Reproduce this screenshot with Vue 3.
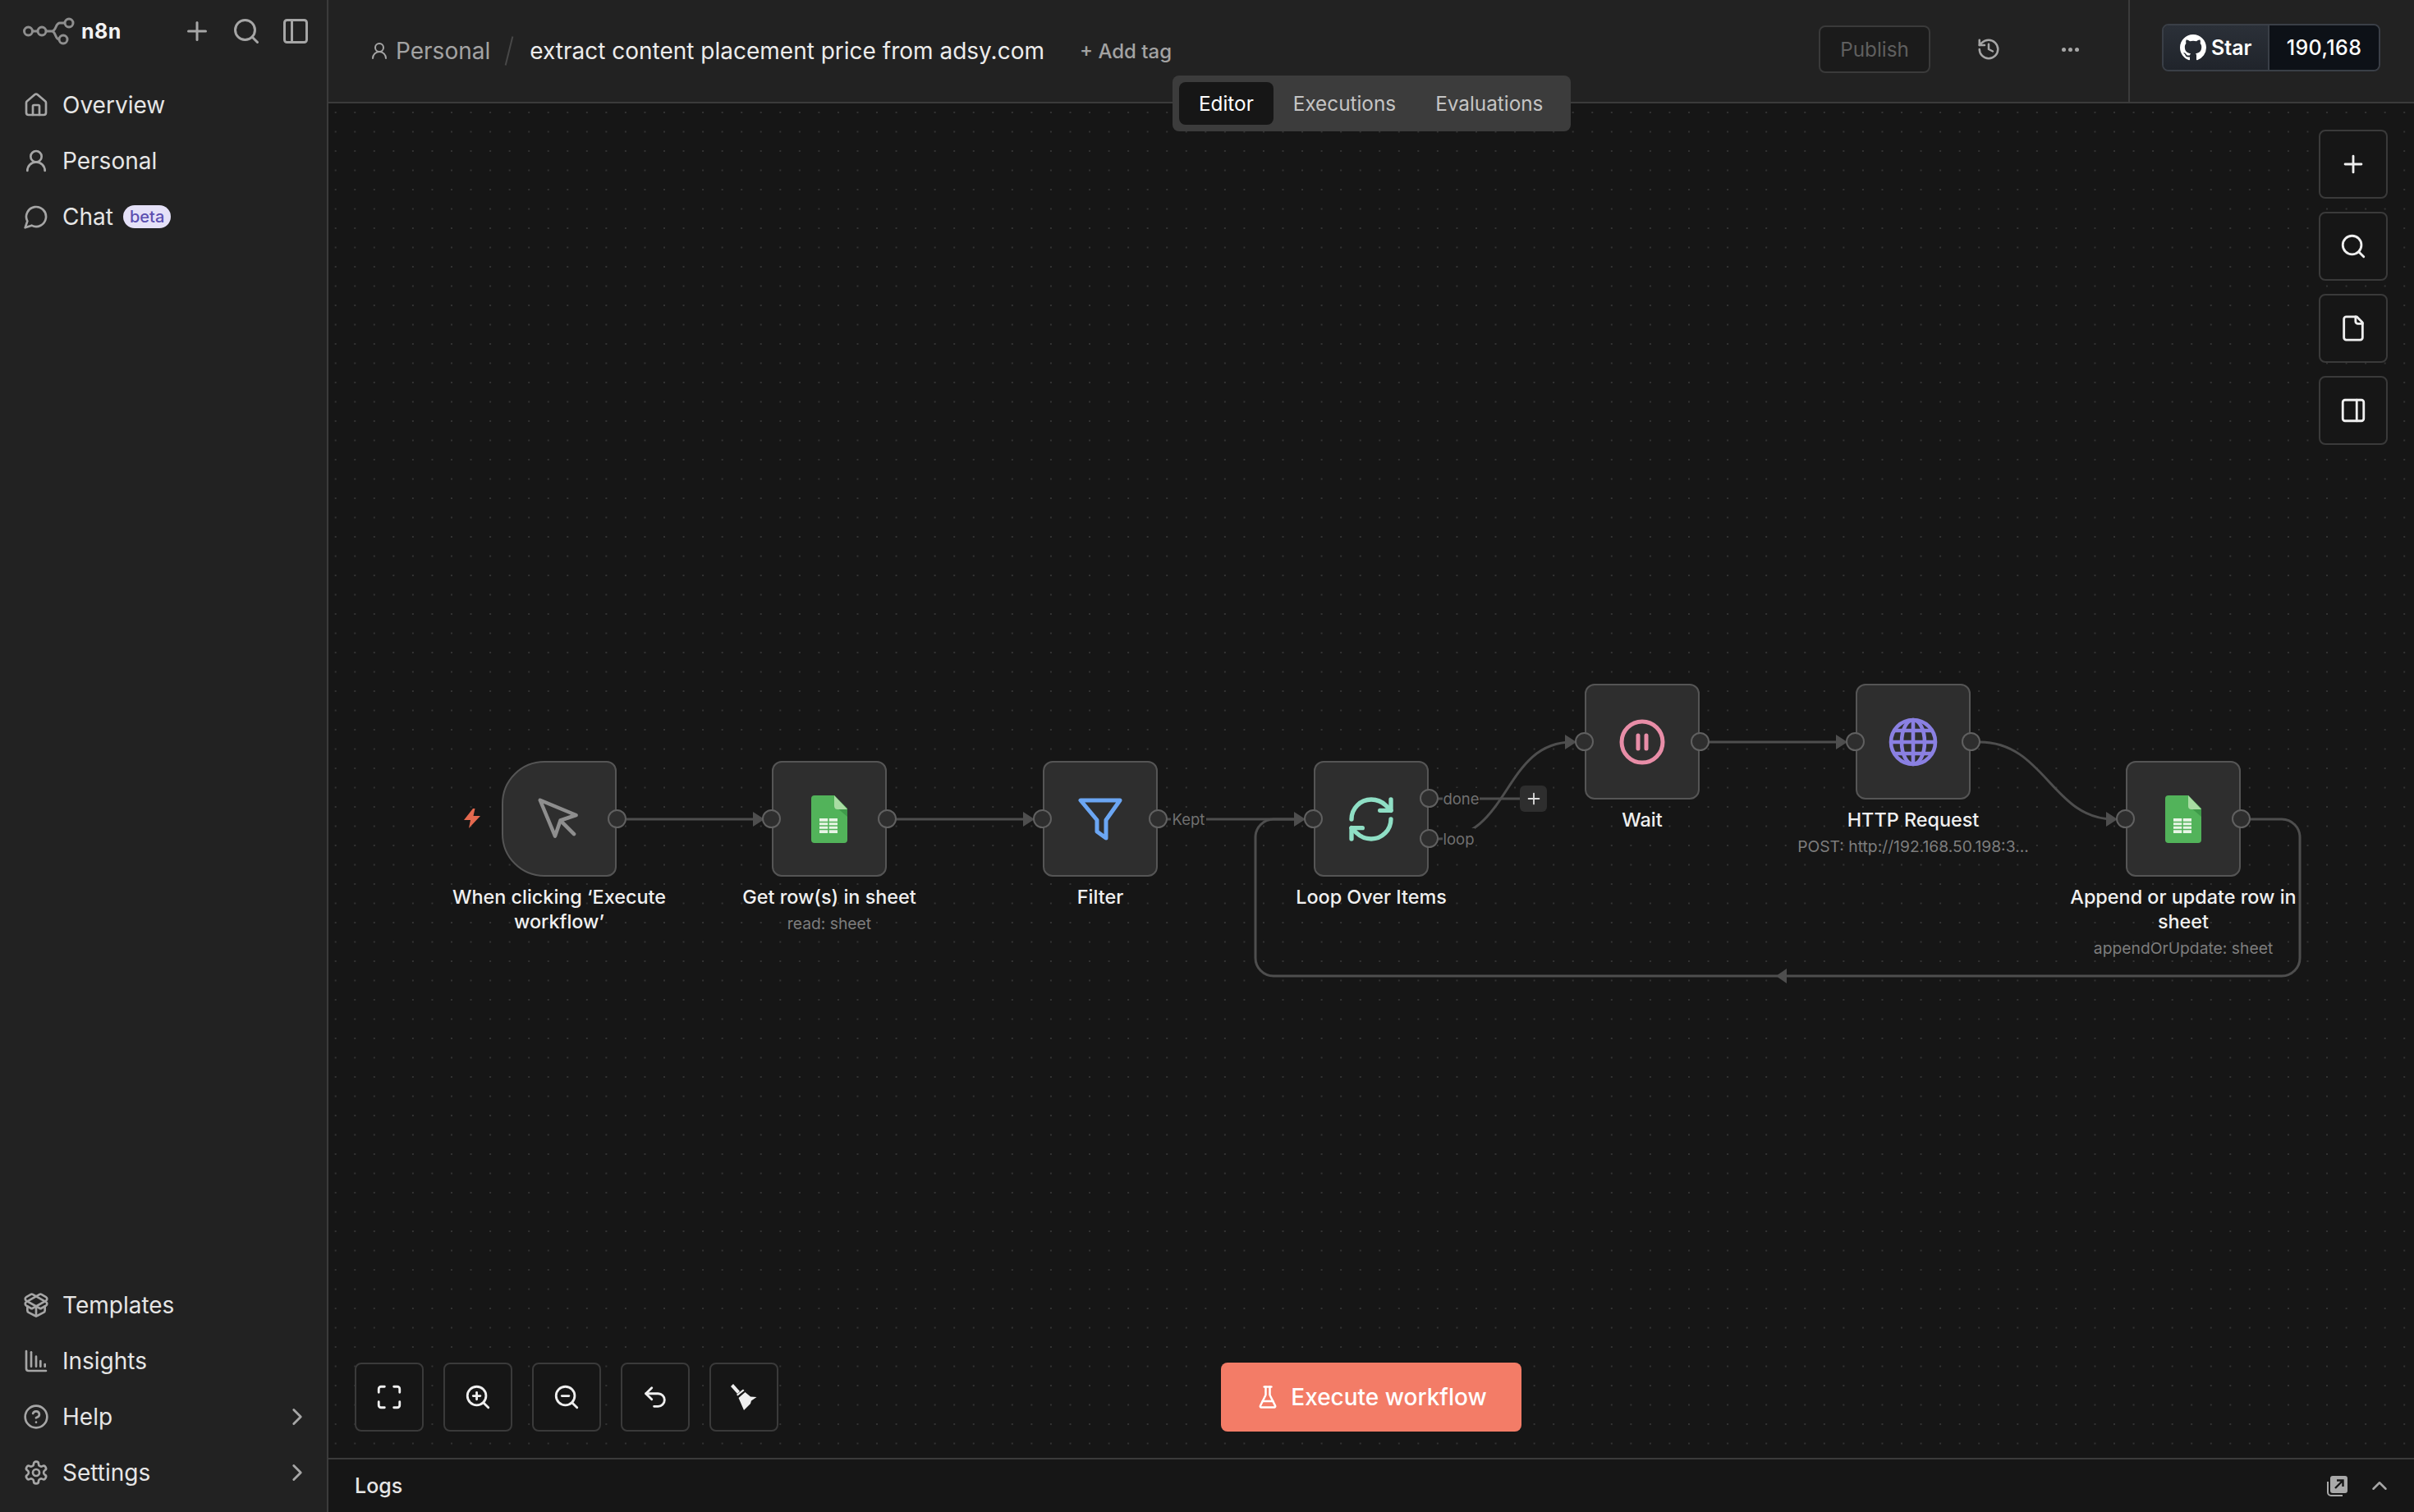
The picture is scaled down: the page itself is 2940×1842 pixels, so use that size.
<script setup>
const icons = {
  home: ['M15 21v-8a1 1 0 0 0-1-1h-4a1 1 0 0 0-1 1v8', 'M3 10a2 2 0 0 1 .709-1.528l7-5.999a2 2 0 0 1 2.582 0l7 5.999A2 2 0 0 1 21 10v9a2 2 0 0 1-2 2H5a2 2 0 0 1-2-2z'],
  user: ['M20 21a8 8 0 0 0-16 0', 'M17 8a5 5 0 1 1-10 0a5 5 0 1 1 10 0'],
  chat: ['M7.9 20A9 9 0 1 0 4 16.1L2 22Z'],
  plus: ['M5 12h14', 'M12 5v14'],
  search: ['M19 11a8 8 0 1 1-16 0a8 8 0 1 1 16 0', 'm21 21-4.3-4.3'],
  panelLeft: ['M5 3h14a2 2 0 0 1 2 2v14a2 2 0 0 1-2 2H5a2 2 0 0 1-2-2V5a2 2 0 0 1 2-2z', 'M9 3v18'],
  panelRight: ['M5 3h14a2 2 0 0 1 2 2v14a2 2 0 0 1-2 2H5a2 2 0 0 1-2-2V5a2 2 0 0 1 2-2z', 'M15 3v18'],
  templates: ['M12 22v-9', 'M15.17 2.21a1.67 1.67 0 0 1 1.63 0L21 4.57a1.93 1.93 0 0 1 0 3.36L8.82 14.79a1.655 1.655 0 0 1-1.64 0L3 12.43a1.93 1.93 0 0 1 0-3.36z', 'M20 13v3.87a2.06 2.06 0 0 1-1.11 1.83l-6 3.08a1.93 1.93 0 0 1-1.78 0l-6-3.08A2.06 2.06 0 0 1 4 16.87V13', 'M21 12.43a1.93 1.93 0 0 0 0-3.36L8.83 2.2a1.64 1.64 0 0 0-1.63 0L3 4.57a1.93 1.93 0 0 0 0 3.36l12.18 6.86a1.636 1.636 0 0 0 1.63 0z'],
  insights: ['M3 3v16a2 2 0 0 0 2 2h16', 'M7.5 17V4', 'M12 17V8', 'M16 17v-5', 'M20 17v-2'],
  help: ['M22 12a10 10 0 1 1-20 0a10 10 0 1 1 20 0', 'M9.09 9a3 3 0 0 1 5.83 1c0 2-3 3-3 3', 'M12 17h.01'],
  settings: ['M12.22 2h-.44a2 2 0 0 0-2 2v.18a2 2 0 0 1-1 1.73l-.43.25a2 2 0 0 1-2 0l-.15-.08a2 2 0 0 0-2.73.73l-.22.38a2 2 0 0 0 .73 2.73l.15.1a2 2 0 0 1 1 1.72v.51a2 2 0 0 1-1 1.74l-.15.09a2 2 0 0 0-.73 2.73l.22.38a2 2 0 0 0 2.73.73l.15-.08a2 2 0 0 1 2 0l.43.25a2 2 0 0 1 1 1.73V20a2 2 0 0 0 2 2h.44a2 2 0 0 0 2-2v-.18a2 2 0 0 1 1-1.73l.43-.25a2 2 0 0 1 2 0l.15.08a2 2 0 0 0 2.73-.73l.22-.39a2 2 0 0 0-.73-2.73l-.15-.08a2 2 0 0 1-1-1.74v-.5a2 2 0 0 1 1-1.74l.15-.09a2 2 0 0 0 .73-2.73l-.22-.38a2 2 0 0 0-2.73-.73l-.15.08a2 2 0 0 1-2 0l-.43-.25a2 2 0 0 1-1-1.73V4a2 2 0 0 0-2-2z', 'M15 12a3 3 0 1 1-6 0a3 3 0 1 1 6 0'],
  chevron: ['m9 18 6-6-6-6'],
  chevronUp: ['m18 15-6-6-6 6'],
  history: ['M3 12a9 9 0 1 0 9-9 9.75 9.75 0 0 0-6.74 2.74L3 8', 'M3 3v5h5', 'M12 7v5l4 2'],
  file: ['M15 2H6a2 2 0 0 0-2 2v16a2 2 0 0 0 2 2h12a2 2 0 0 0 2-2V7Z', 'M14 2v4a2 2 0 0 0 2 2h4'],
  fit: ['M8 3H5a2 2 0 0 0-2 2v3', 'M21 8V5a2 2 0 0 0-2-2h-3', 'M3 16v3a2 2 0 0 0 2 2h3', 'M16 21h3a2 2 0 0 0 2-2v-3'],
  zoomIn: ['M19 11a8 8 0 1 1-16 0a8 8 0 1 1 16 0', 'm21 21-4.3-4.3', 'M11 8v6', 'M8 11h6'],
  zoomOut: ['M19 11a8 8 0 1 1-16 0a8 8 0 1 1 16 0', 'm21 21-4.3-4.3', 'M8 11h6'],
  undo: ['M9 14 4 9l5-5', 'M4 9h10.5a5.5 5.5 0 0 1 0 11H11'],
  flask: ['M10 2v7.527a2 2 0 0 1-.211.896L4.72 20.55a1 1 0 0 0 .9 1.45h12.76a1 1 0 0 0 .9-1.45l-5.069-10.127A2 2 0 0 1 14 9.527V2', 'M8.5 2h7', 'M7 16h10'],
  pointer: ['M3 3l7.07 16.97 2.51-7.39 7.39-2.51L3 3z', 'M13 13l6 6'],
  sync: ['M3 12a9 9 0 0 1 9-9 9.75 9.75 0 0 1 6.74 2.74L21 8', 'M21 3v5h-5', 'M21 12a9 9 0 0 1-9 9 9.75 9.75 0 0 1-6.74-2.74L3 16', 'M8 16H3v5'],
}

const topNav = [
  { icon: 'home', label: 'Overview' },
  { icon: 'user', label: 'Personal' },
  { icon: 'chat', label: 'Chat', badge: 'beta' },
]
const bottomNav = [
  { icon: 'templates', label: 'Templates' },
  { icon: 'insights', label: 'Insights' },
  { icon: 'help', label: 'Help', more: true },
  { icon: 'settings', label: 'Settings', more: true },
]

const sideTools = ['plus', 'search', 'file', 'panelRight']
const bottomTools = ['fit', 'zoomIn', 'zoomOut', 'undo']

// page coordinates, the canvas starts at 400,126
const nodes = [
  { x: 611, y: 927, h: 141, icon: 'pointer', title: 'When clicking ‘Execute\nworkflow’', trigger: true, outs: [0] },
  { x: 940, y: 927, h: 141, icon: 'sheets', title: 'Get row(s) in sheet', sub: 'read: sheet', ins: true, outs: [0] },
  { x: 1270, y: 927, h: 141, icon: 'filter', title: 'Filter', ins: true, outs: [0] },
  { x: 1600, y: 927, h: 141, icon: 'sync', title: 'Loop Over Items', ins: true, outs: [-25, 24] },
  { x: 1930, y: 833, h: 141, icon: 'wait', title: 'Wait', ins: true, outs: [0] },
  { x: 2260, y: 833, h: 141, icon: 'globe', title: 'HTTP Request', sub: 'POST: http://192.168.50.198:3...', ins: true, outs: [0] },
  { x: 2589, y: 927, h: 141, icon: 'sheets', title: 'Append or update row in\nsheet', sub: 'appendOrUpdate: sheet', ins: true, outs: [0] },
]

const edgeLabels = [
  { text: 'Kept', x: 1426, y: 998, w: 43 },
  { text: 'done', x: 1757, y: 973, w: 45 },
  { text: 'loop', x: 1757, y: 1022, w: 39 },
]

const edges = [
  'M763 998H925',
  'M1091 998H1255',
  'M1421 998H1585',
  'M1751 973H1860',
  'M1751 1022C1840 1022 1830 904 1915 904',
  'M2081 904H2245',
  'M2411 904C2490 904 2500 998 2574 998',
  'M2740 998H2779a22 22 0 0 1 22 22V1167a22 22 0 0 1-22 22H1551a22 22 0 0 1-22-22V1020a22 22 0 0 1 22-22H1585',
]
const arrows = ['917,989 931,998 917,1007', '1246,989 1260,998 1246,1007', '1576,989 1590,998 1576,1007', '1906,895 1920,904 1906,913', '2236,895 2250,904 2236,913', '2565,989 2579,998 2565,1007', '2176,1180 2163,1189 2176,1198']

function pos(n) {
  return { left: n.x - 400 + 'px', top: n.y - 126 + 'px' }
}
function labelPos(l) {
  return { left: l.x - 400 + 'px', top: l.y - 126 + 'px', width: l.w + 'px' }
}
</script>

<template>
  <div class="app">
    <aside class="sidebar">
      <div class="side-head">
        <svg class="logo" width="66" height="36" viewBox="26 20 66 36" fill="none" stroke="#8f8f8f" stroke-width="3">
          <circle cx="33.5" cy="38" r="5" />
          <circle cx="50" cy="38" r="5" />
          <circle cx="83" cy="28" r="5" />
          <circle cx="76" cy="48" r="5" />
          <path d="M38.5 38H45M55 38H62C68 38 66 28 72 28H78M62 38C67 38 66 48 71 48" />
        </svg>
        <span class="brand">n8n</span>
        <div class="head-icons">
          <svg v-for="n in ['plus', 'search', 'panelLeft']" :key="n" class="ico" width="36" height="36" viewBox="0 0 24 24">
            <path v-for="d in icons[n]" :key="d" :d="d" />
          </svg>
        </div>
      </div>
      <nav class="nav">
        <div v-for="item in topNav" :key="item.label" class="nav-item">
          <svg class="ico nav-ico" width="32" height="32" viewBox="0 0 24 24">
            <path v-for="d in icons[item.icon]" :key="d" :d="d" />
          </svg>
          <span>{{ item.label }}</span>
          <span v-if="item.badge" class="badge">{{ item.badge }}</span>
        </div>
      </nav>
      <nav class="nav nav-bottom">
        <div v-for="item in bottomNav" :key="item.label" class="nav-item">
          <svg class="ico nav-ico" width="32" height="32" viewBox="0 0 24 24">
            <path v-for="d in icons[item.icon]" :key="d" :d="d" />
          </svg>
          <span>{{ item.label }}</span>
          <svg v-if="item.more" class="ico more" width="34" height="34" viewBox="0 0 24 24">
            <path v-for="d in icons.chevron" :key="d" :d="d" />
          </svg>
        </div>
      </nav>
    </aside>

    <main class="main">
      <header class="header">
        <div class="crumbs">
          <svg class="ico crumb-ico" width="24" height="24" viewBox="0 0 24 24">
            <path v-for="d in icons.user" :key="d" :d="d" />
          </svg>
          <span class="crumb">Personal</span>
          <span class="slash"></span>
          <span class="title">extract content placement price from adsy.com</span>
          <span class="add-tag">+ Add tag</span>
        </div>
        <div class="actions">
          <button class="publish">Publish</button>
          <svg class="ico hist" width="30" height="30" viewBox="0 0 24 24">
            <path v-for="d in icons.history" :key="d" :d="d" />
          </svg>
          <span class="dots"><i></i><i></i><i></i></span>
        </div>
        <div class="gh-wrap">
          <div class="gh">
            <span class="gh-star">
              <svg width="32" height="32" viewBox="0 0 16 16" fill="#fff"><path d="M8 0C3.58 0 0 3.58 0 8c0 3.54 2.29 6.53 5.47 7.59.4.07.55-.17.55-.38 0-.19-.01-.82-.01-1.49-2.01.37-2.53-.49-2.69-.94-.09-.23-.48-.94-.82-1.13-.28-.15-.68-.52-.01-.53.63-.01 1.08.58 1.23.82.72 1.21 1.87.87 2.33.66.07-.52.28-.87.51-1.07-1.78-.2-3.64-.89-3.64-3.95 0-.87.31-1.59.82-2.15-.08-.2-.36-1.02.08-2.12 0 0 .67-.21 2.2.82.64-.18 1.32-.27 2-.27.68 0 1.36.09 2 .27 1.53-1.04 2.2-.82 2.2-.82.44 1.1.16 1.92.08 2.12.51.56.82 1.27.82 2.15 0 3.07-1.87 3.75-3.65 3.95.29.25.54.73.54 1.48 0 1.07-.01 1.93-.01 2.2 0 .21.15.46.55.38A8.013 8.013 0 0016 8c0-4.42-3.58-8-8-8z" /></svg>
              Star
            </span>
            <span class="gh-count">190,168</span>
          </div>
        </div>
        <div class="tabs">
          <span class="tab active">Editor</span>
          <span class="tab">Executions</span>
          <span class="tab">Evaluations</span>
        </div>
      </header>

      <section class="canvas">
        <svg class="edges" width="2540" height="1650" viewBox="400 126 2540 1650" fill="none">
          <path v-for="d in edges" :key="d" :d="d" stroke="#4e4e4e" stroke-width="3" />
          <polygon v-for="p in arrows" :key="p" :points="p" fill="#4e4e4e" />
        </svg>

        <span v-for="l in edgeLabels" :key="l.text" class="edge-label" :style="labelPos(l)">{{ l.text }}</span>
        <span class="edge-plus">
          <svg class="ico" width="22" height="22" viewBox="0 0 24 24" style="stroke:#ddd">
            <path v-for="d in icons.plus" :key="d" :d="d" />
          </svg>
        </span>

        <div v-for="n in nodes" :key="n.title" class="node" :style="pos(n)">
          <svg v-if="n.trigger" class="bolt" width="20" height="24" viewBox="0 0 20 24"><path d="M11 0 0 14h8L6 24 20 9h-8.500l2-9z" fill="#e4694f" /></svg>
          <div class="box" :class="{ trigger: n.trigger }" :style="{ height: n.h + 'px' }">
            <span v-if="n.ins" class="handle in"></span>
            <span v-for="o in n.outs" :key="o" class="handle out" :style="{ top: 'calc(50% + ' + o + 'px)' }"></span>

            <svg v-if="n.icon === 'pointer'" class="ico node-ico" width="62" height="62" viewBox="0 0 24 24" style="stroke:#8e8e8e;stroke-width:1.75">
              <path v-for="d in icons.pointer" :key="d" :d="d" />
            </svg>
            <svg v-else-if="n.icon === 'sheets'" width="44" height="58" viewBox="0 0 44 58">
              <path d="M4 0H28L44 16V54a4 4 0 0 1-4 4H4a4 4 0 0 1-4-4V4a4 4 0 0 1 4-4z" fill="#52b35a" />
              <path d="M30 14 44 26V16z" fill="#3f9a4a" />
              <path d="M28 0 44 17H32a4 4 0 0 1-4-4z" fill="#a9dca3" />
              <path d="M10 28h22v18H10z" fill="#e8f5e6" />
              <path d="M10 32.500h22M10 37h22M10 41.500h22M21 28v18" stroke="#52b35a" stroke-width="1.600" fill="none" />
            </svg>
            <svg v-else-if="n.icon === 'filter'" width="54" height="52" viewBox="0 0 54 52" fill="none" stroke="#6ba6f3" stroke-width="5" stroke-linejoin="round" stroke-linecap="round">
              <path d="M3 3H51L34 27V49L23 41V27Z" />
            </svg>
            <svg v-else-if="n.icon === 'sync'" class="ico node-ico" width="64" height="64" viewBox="0 0 24 24" style="stroke:#8fdfc5;stroke-width:2">
              <path v-for="d in icons.sync" :key="d" :d="d" />
            </svg>
            <svg v-else-if="n.icon === 'wait'" width="56" height="56" viewBox="0 0 56 56" fill="none" stroke="#e88da7">
              <circle cx="28" cy="28" r="25" stroke-width="5" />
              <path d="M23 20V36M33 20V36" stroke-width="5" stroke-linecap="round" />
            </svg>
            <svg v-else-if="n.icon === 'globe'" width="60" height="60" viewBox="0 0 60 60" fill="none" stroke="#8a80e2" stroke-width="4.600">
              <circle cx="30" cy="30" r="27" />
              <ellipse cx="30" cy="30" rx="14" ry="27" />
              <path d="M30 3V57M3 30H57M7 16H53M7 44H53" />
            </svg>
          </div>
          <div class="label">
            <div class="node-title">{{ n.title }}</div>
            <div v-if="n.sub" class="node-sub">{{ n.sub }}</div>
          </div>
        </div>

        <div class="side-tools">
          <span v-for="t in sideTools" :key="t" class="tool">
            <svg class="ico tool-ico" width="34" height="34" viewBox="0 0 24 24">
              <path v-for="d in icons[t]" :key="d" :d="d" />
            </svg>
          </span>
        </div>

        <div class="bottom-tools">
          <span v-for="t in bottomTools" :key="t" class="tool">
            <svg class="ico tool-ico" width="34" height="34" viewBox="0 0 24 24">
              <path v-for="d in icons[t]" :key="d" :d="d" />
            </svg>
          </span>
          <span class="tool">
            <svg width="34" height="34" viewBox="0 0 34 34" fill="#eee">
              <path d="M1 4 4 1 12 10 9 13z" />
              <path d="M8 14 16 7.500 17.500 9 9.500 15.500z" />
              <path d="M10.500 18 18.500 11 25 16.500 32.500 17 26 21.500 25 25 17 33z" />
            </svg>
          </span>
        </div>

        <button class="execute">
          <svg class="ico" width="30" height="30" viewBox="0 0 24 24" style="stroke:#fff">
            <path v-for="d in icons.flask" :key="d" :d="d" />
          </svg>
          Execute workflow
        </button>
      </section>

      <footer class="logs">
        <span class="logs-title">Logs</span>
        <svg width="26" height="26" viewBox="0 0 26 26" class="pop">
          <path d="M7 1h15a3 3 0 0 1 3 3v15a3 3 0 0 1-3 3H7a3 3 0 0 1-3-3V4a3 3 0 0 1 3-3z" fill="#a9a9a9" />
          <path d="M1 8v13a4 4 0 0 0 4 4h14" fill="none" stroke="#a9a9a9" stroke-width="2" />
          <path d="M10 16 19 7M12 6.500h7.500V14" fill="none" stroke="#161616" stroke-width="2.400" />
        </svg>
        <svg class="ico" width="30" height="30" viewBox="0 0 24 24">
          <path v-for="d in icons.chevronUp" :key="d" :d="d" />
        </svg>
      </footer>
    </main>
  </div>
</template>

<style scoped>
.app {
  display: flex;
  width: 2940px;
  height: 1842px;
  font-family: Inter, "Noto Sans", sans-serif;
  color: #e8e8e8;
  overflow: hidden;
}
.ico {
  fill: none;
  stroke: #a6a6a6;
  stroke-width: 2;
  stroke-linecap: round;
  stroke-linejoin: round;
  flex: none;
}

.sidebar {
  width: 400px;
  flex: none;
  display: flex;
  flex-direction: column;
  background: #222;
  border-right: 2px solid #3b3b3b;
  box-sizing: border-box;
}
.side-head {
  display: flex;
  align-items: center;
  height: 76px;
  padding: 0 19px 0 27px;
  margin-bottom: 17.5px;
}
.logo {
  margin-right: 6px;
}
.brand {
  font-size: 25px;
  font-weight: 700;
  letter-spacing: 0.5px;
  color: #f2f2f2;
}
.head-icons {
  margin-left: auto;
  display: flex;
  gap: 24px;
  margin-right: 1px;
}
.nav-item {
  height: 68px;
  display: flex;
  align-items: center;
  padding: 0 22px 0 28px;
  font-size: 28px;
  color: #e6e6e6;
}
.nav-ico {
  margin-right: 16px;
}
.nav-bottom {
  margin-top: auto;
  padding-bottom: 14px;
}
.badge {
  margin-left: 12px;
  background: #e5e1f8;
  color: #5b4fb0;
  font-size: 20px;
  font-weight: 500;
  line-height: 28px;
  padding: 0 8px;
  border-radius: 14px;
}
.more {
  margin-left: auto;
  margin-right: -3px;
}

.main {
  flex: 1;
  display: flex;
  flex-direction: column;
  min-width: 0;
}
.header {
  position: relative;
  height: 126px;
  flex: none;
  display: flex;
  box-sizing: border-box;
  background: #222;
  border-bottom: 2px solid #3b3b3b;
}
.crumbs {
  display: flex;
  align-items: center;
  height: 124px;
  padding-left: 50px;
  box-sizing: border-box;
}
.crumb-ico {
  margin-right: 8px;
}
.crumb {
  font-size: 28px;
  color: #a3a3a3;
}
.slash {
  width: 2px;
  height: 36px;
  margin: 0 24px 0 22px;
  background: #484848;
  transform: rotate(14deg);
}
.title {
  font-size: 28px;
  color: #ececec;
}
.add-tag {
  margin-left: 43px;
  font-size: 24px;
  font-weight: 500;
  color: #a3a3a3;
}
.actions {
  margin-left: auto;
  display: flex;
  align-items: center;
  padding-bottom: 4px;
}
.publish {
  width: 136px;
  height: 58px;
  background: #1b1b1b;
  border: 2px solid #3a3a3a;
  border-radius: 8px;
  color: #5f5f5f;
  font-family: inherit;
  font-size: 24.3px;
  box-sizing: border-box;
}
.hist {
  margin-left: 56px;
}
.dots {
  margin: 0 60px 0 74px;
  display: flex;
  gap: 3px;
}
.dots i {
  width: 5px;
  height: 5px;
  border-radius: 50%;
  background: #a6a6a6;
}
.gh-wrap {
  width: 348px;
  box-sizing: border-box;
  border-left: 2px solid #3b3b3b;
  padding: 29px 41px 0 39px;
}
.gh {
  display: flex;
  height: 58px;
  border: 2px solid #3a3f47;
  border-radius: 8px;
  overflow: hidden;
  box-sizing: border-box;
  font-size: 25px;
  color: #fff;
}
.gh-star {
  width: 129px;
  display: flex;
  align-items: center;
  gap: 6px;
  padding-left: 20px;
  box-sizing: border-box;
  font-weight: 600;
  background: linear-gradient(#2b3038, #20242b);
  border-right: 2px solid #3a3f47;
}
.gh-count {
  flex: 1;
  text-align: center;
  line-height: 54px;
  font-weight: 500;
  letter-spacing: 0.4px;
  background: #0d1117;
}
.tabs {
  position: absolute;
  left: 1028px;
  top: 92px;
  width: 485px;
  height: 68px;
  box-sizing: border-box;
  padding: 8px;
  display: flex;
  background: #3c3c3c;
  border-radius: 8px;
  z-index: 3;
}
.tab {
  font-size: 24.3px;
  line-height: 52px;
  padding: 0 24px;
  color: #c4c4c4;
}
.tab.active {
  background: #161616;
  color: #fff;
  border-radius: 8px;
}

.canvas {
  position: relative;
  flex: 1;
  background-color: #161616;
  background-image: radial-gradient(circle, #333 0, #333 0.8px, transparent 1.3px);
  background-size: 23.55px 23.5px;
  background-position: -3.07px -0.75px;
  overflow: hidden;
}
.edges {
  position: absolute;
  left: 0;
  top: 0;
}
.edge-label {
  position: absolute;
  transform: translateY(-50%);
  background: #161616;
  color: #707070;
  font-size: 18.5px;
  line-height: 26px;
  text-align: center;
}
.edge-plus {
  position: absolute;
  left: 1451px;
  top: 831px;
  width: 33px;
  height: 32px;
  display: flex;
  align-items: center;
  justify-content: center;
  background: #2e2e2e;
  border-radius: 6px;
}
.node {
  position: absolute;
  width: 140px;
}
.bolt {
  position: absolute;
  left: -46px;
  top: 58px;
}
.box {
  position: relative;
  display: flex;
  align-items: center;
  justify-content: center;
  box-sizing: border-box;
  background: #2e2e2e;
  border: 2px solid #555;
  border-radius: 12px;
}
.box.trigger {
  border-radius: 52px 12px 12px 52px;
}
.handle {
  position: absolute;
  top: 50%;
  width: 23px;
  height: 23px;
  box-sizing: border-box;
  margin-top: -11.5px;
  border: 2px solid #606060;
  border-radius: 50%;
  background: #2e2e2e;
}
.handle.in {
  left: -14.5px;
}
.handle.out {
  right: -13.5px;
}
.label {
  width: 300px;
  margin: 10px 0 0 -80px;
  text-align: center;
}
.node-title {
  font-size: 23.4px;
  font-weight: 500;
  line-height: 30px;
  color: #f0f0f0;
  white-space: pre-line;
}
.node-sub {
  margin-top: 3px;
  font-size: 19.3px;
  line-height: 28px;
  color: #7d7d7d;
}

.side-tools {
  position: absolute;
  right: 32px;
  top: 32px;
  display: flex;
  flex-direction: column;
  gap: 16px;
}
.bottom-tools {
  position: absolute;
  left: 32px;
  bottom: 32px;
  display: flex;
  gap: 24px;
}
.tool {
  width: 84px;
  height: 84px;
  box-sizing: border-box;
  display: flex;
  align-items: center;
  justify-content: center;
  background: #161616;
  border: 2px solid #3a3a3a;
  border-radius: 8px;
}
.tool-ico {
  stroke: #efefef;
}
.execute {
  position: absolute;
  left: 1087px;
  bottom: 32px;
  width: 366px;
  height: 84px;
  display: flex;
  align-items: center;
  justify-content: center;
  gap: 13px;
  border: 0;
  border-radius: 8px;
  background: #f37c67;
  color: #fff;
  font-family: inherit;
  font-size: 28px;
  font-weight: 500;
}

.logs {
  height: 66px;
  flex: none;
  box-sizing: border-box;
  display: flex;
  align-items: center;
  padding: 0 27px 0 32px;
  background: #161616;
  border-top: 2px solid #3b3b3b;
}
.logs-title {
  font-size: 25px;
  font-weight: 500;
  color: #e6e6e6;
  margin-right: auto;
}
.pop {
  margin-right: 23px;
}
</style>

<style>
html, body {
  margin: 0;
  background: #161616;
}
</style>
